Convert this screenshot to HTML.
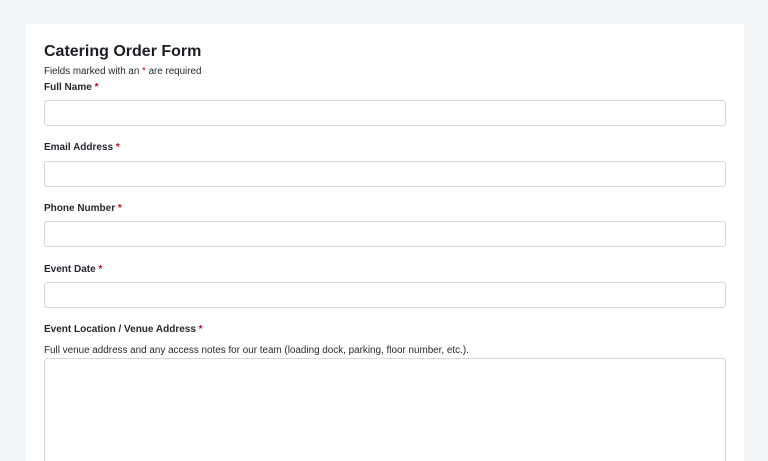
<!DOCTYPE html>
<html><head><style>
html,body{margin:0;width:768px;height:461px;overflow:hidden}
body{background:#f3f6f9;font-family:"Liberation Sans",Arial,sans-serif;color:#1f2328;position:relative}
.card{position:absolute;left:26px;top:24px;width:718px;height:437px;background:#fff}
.a{position:absolute;left:44px;white-space:nowrap}
h1{position:absolute;left:44px;top:43px;margin:0;font-size:16px;font-weight:bold;color:#1a1d21}
.lab{font-size:10px;font-weight:bold;color:#24292f}
.s{color:#d0021b}
.sub{font-size:9.8px;color:#24292f}
.in{position:absolute;left:44px;width:680px;height:24px;border:1px solid #d4d9de;border-radius:3px;background:#fff}
</style></head><body>
<div class="card"></div>
<h1>Catering Order Form</h1>
<div class="a sub" style="top:66px">Fields marked with an <span class="s">*</span> are required</div>
<div class="a lab" style="top:82px">Full Name <span class="s">*</span></div>
<div class="in" style="top:100px"></div>
<div class="a lab" style="top:142px">Email Address <span class="s">*</span></div>
<div class="in" style="top:161px"></div>
<div class="a lab" style="top:203px">Phone Number <span class="s">*</span></div>
<div class="in" style="top:221px"></div>
<div class="a lab" style="top:264px">Event Date <span class="s">*</span></div>
<div class="in" style="top:282px"></div>
<div class="a lab" style="top:324px">Event Location / Venue Address <span class="s">*</span></div>
<div class="a" style="top:345px;font-size:9.9px;color:#24292f">Full venue address and any access notes for our team (loading dock, parking, floor number, etc.).</div>
<div class="in" style="top:358px;height:120px"></div>
</body></html>
